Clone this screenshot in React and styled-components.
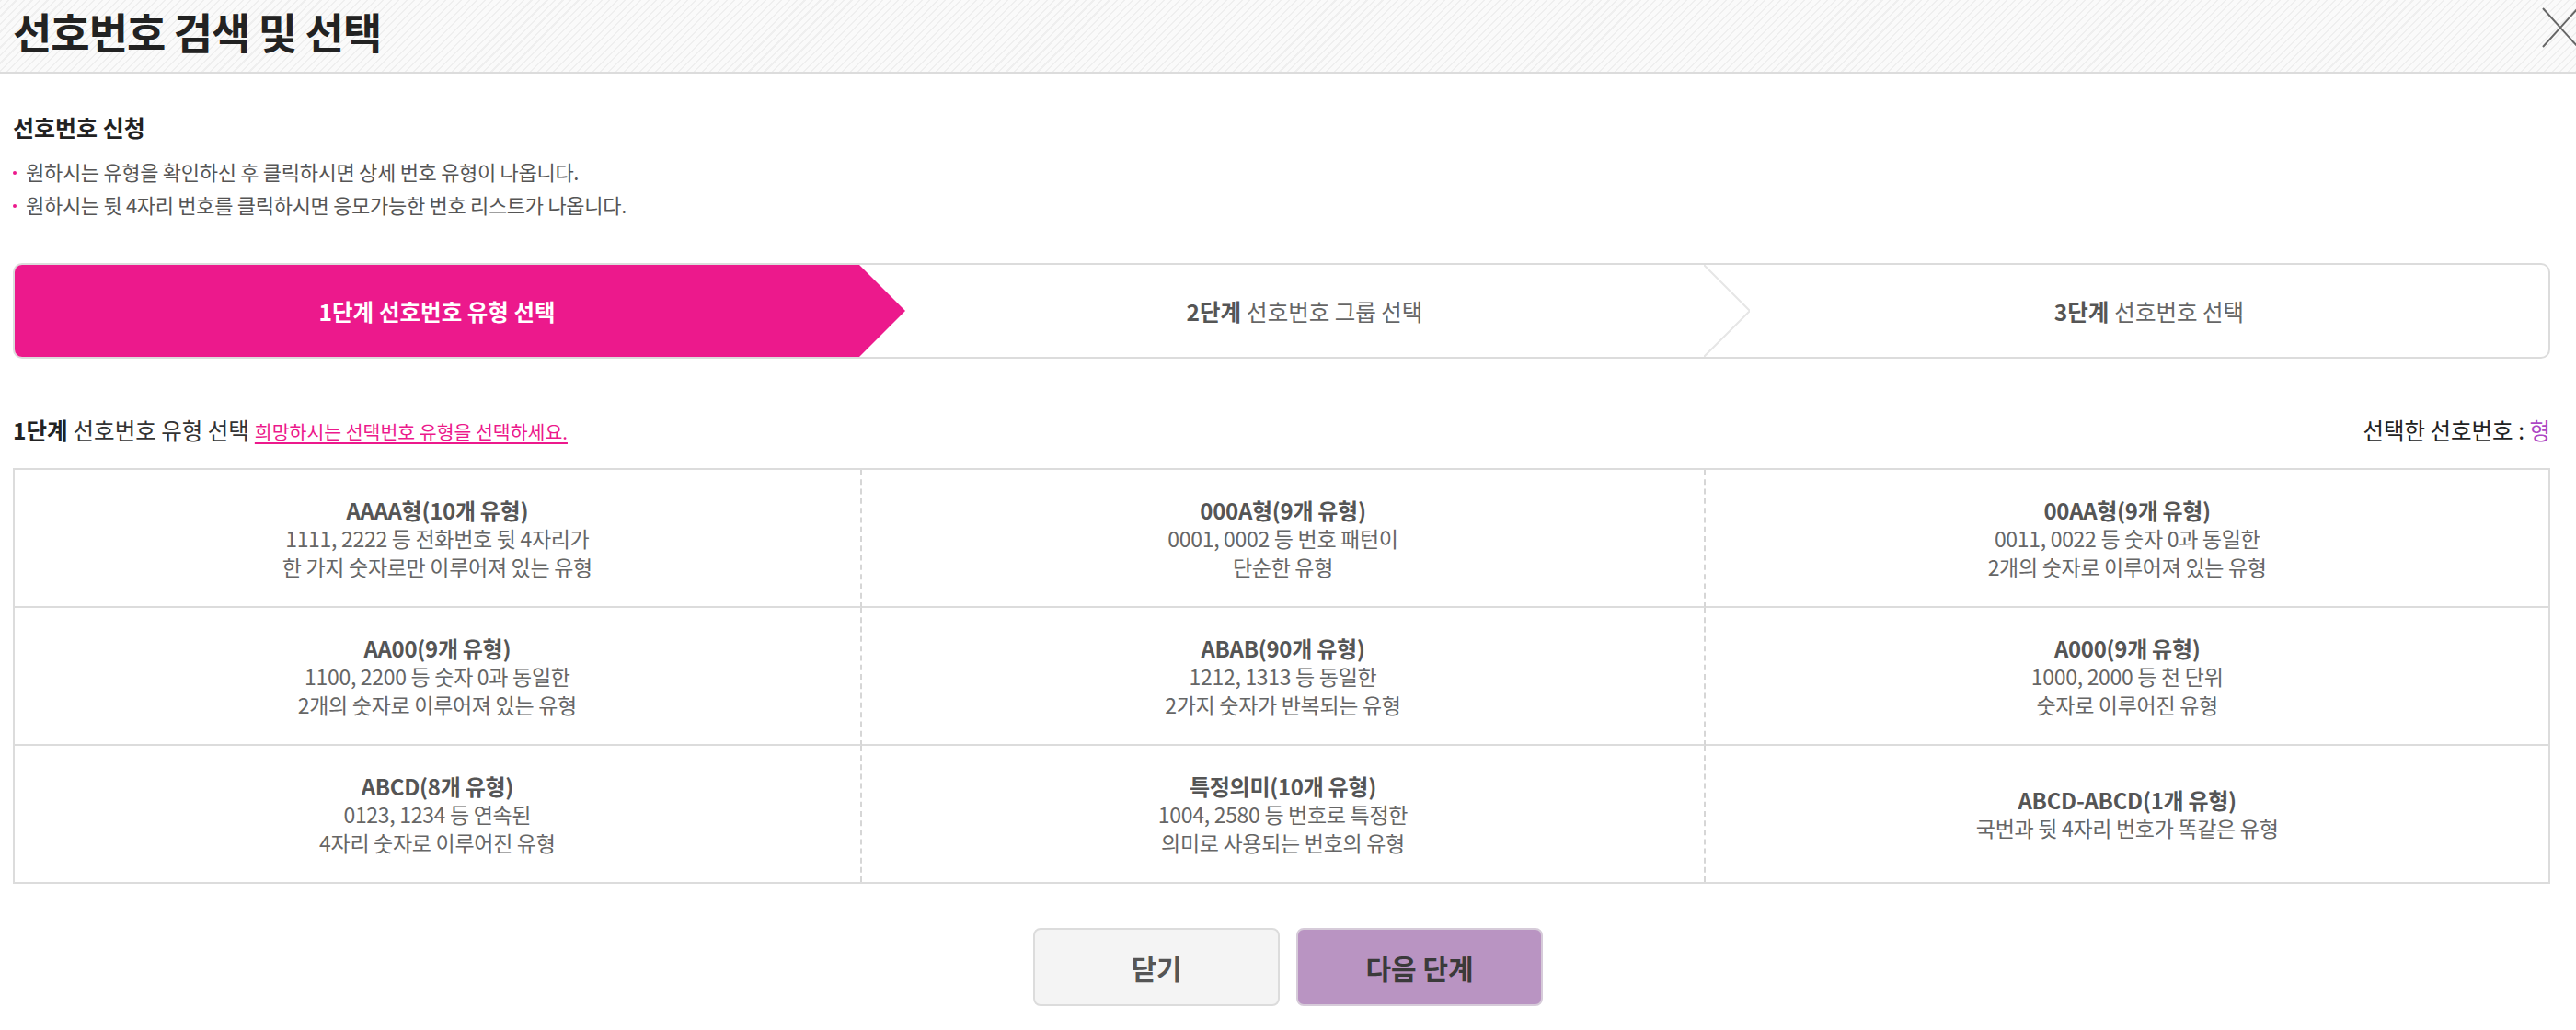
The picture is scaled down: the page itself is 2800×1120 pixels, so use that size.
import React from 'react'
import styled, { createGlobalStyle } from 'styled-components'

const PINK = '#ec198c'

const GlobalStyle = createGlobalStyle`
  * {
    box-sizing: border-box;
  }
  body {
    margin: 0;
    background: #fff;
    font-family: "Noto Sans CJK KR", "Noto Sans", sans-serif;
    color: #333;
  }
`

const Page = styled.div`
  width: 2800px;
  overflow: hidden;
`

const Header = styled.header`
  height: 80px;
  display: flex;
  justify-content: space-between;
  align-items: flex-start;
  padding-left: 14px;
  border-bottom: 2px solid #dcdcdc;
  background: repeating-linear-gradient(135deg, #efefef 0 1.5px, #fafafa 1.5px 6px);
`

const Title = styled.h1`
  margin: 0;
  font-size: 46px;
  line-height: 66px;
  font-weight: 700;
  color: #222;
  letter-spacing: -1px;
`

const CloseButton = styled.button`
  display: flex;
  width: 40px;
  height: 44px;
  margin: 8px -3px 0 0;
  padding: 0;
  border: 0;
  background: none;
  cursor: pointer;
`

const Content = styled.main`
  padding: 0 28px 0 14px;
`

const IntroTitle = styled.h2`
  margin: 42px 0 14px;
  font-size: 25px;
  line-height: 32px;
  font-weight: 700;
  color: #222;
`

const NoticeList = styled.ul`
  list-style: none;
  margin: 0;
  padding: 0;
`

const Notice = styled.li`
  display: flex;
  align-items: center;
  font-size: 22px;
  line-height: 36px;
  color: #555;
  letter-spacing: -0.3px;

  &::before {
    content: '';
    width: 4px;
    height: 4px;
    margin: 4px 10px 0 0;
    border-radius: 50%;
    background: ${PINK};
  }
`

const StepBar = styled.ol`
  list-style: none;
  display: flex;
  height: 104px;
  margin: 46px 0 0;
  padding: 0;
  border: 2px solid #dcdcdc;
  border-radius: 10px;
`

const Step = styled.li`
  position: relative;
  flex: 0 0 33.3333%;
  display: flex;
  align-items: center;
  justify-content: center;
  padding-left: ${(p) => (p.$index === 0 ? 0 : 50)}px;
  font-size: 24.5px;
  color: #666;
  background: ${(p) => (p.$active ? PINK : 'transparent')};
  border-radius: ${(p) => (p.$index === 0 ? '8px 0 0 8px' : 0)};
  z-index: ${(p) => 3 - p.$index};
`

const StepNum = styled.strong`
  font-weight: 700;
  color: ${(p) => (p.$active ? '#fff' : '#555')};
  margin-right: 6px;
`

const StepName = styled.span`
  color: ${(p) => (p.$active ? '#fff' : '#666')};
  font-weight: ${(p) => (p.$active ? 700 : 400)};
`

const StepArrow = styled.svg`
  position: absolute;
  top: 0;
  right: -50px;
  width: 50px;
  height: 100%;
`

const SectionRow = styled.div`
  display: flex;
  justify-content: space-between;
  align-items: baseline;
  margin-top: 62px;
  font-size: 24.5px;
  line-height: 32px;
  color: #333;
`

const SectionTitle = styled.div`
  strong {
    color: #222;
    font-weight: 700;
    margin-right: 6px;
  }
`

const HintLink = styled.a`
  margin-left: 6px;
  font-size: 20.5px;
  color: ${PINK};
  text-decoration: underline;
  text-underline-offset: 3px;
  cursor: pointer;
`

const Selected = styled.div`
  color: #222;
`

const SelectedValue = styled.span`
  color: #ad46c4;
`

const TypeGrid = styled.div`
  display: grid;
  grid-template-columns: 922fr 919fr 917fr;
  margin-top: 24px;
  border: 2px solid #dcdcdc;
`

const TypeCell = styled.button`
  display: flex;
  flex-direction: column;
  align-items: center;
  justify-content: center;
  height: 150px;
  padding: 0;
  border: 0;
  border-bottom: 2px solid #dcdcdc;
  border-right: 2px dashed #d6d6d6;
  background: #fff;
  font-family: inherit;
  font-size: 23px;
  line-height: 31px;
  color: #666;
  letter-spacing: -0.3px;
  cursor: pointer;

  &:nth-child(3n) {
    border-right: 0;
  }
  &:nth-last-child(-n + 3) {
    border-bottom: 0;
    height: 148px;
  }
`

const TypeName = styled.strong`
  font-size: 24px;
  font-weight: 700;
  color: #555;
`

const ButtonRow = styled.div`
  display: flex;
  justify-content: center;
  gap: 18px;
  margin: 48px -14px 0 0;
`

const ActionButton = styled.button`
  width: 268px;
  height: 85px;
  border-radius: 8px;
  border: 2px solid ${(p) => (p.$primary ? '#d6cbd9' : '#dcdcdc')};
  background: ${(p) => (p.$primary ? '#b994c2' : '#f4f4f4')};
  color: ${(p) => (p.$primary ? '#3a3a3a' : '#555')};
  font-family: inherit;
  font-size: 30px;
  font-weight: 700;
  cursor: pointer;
`

const steps = [
  { num: '1단계', name: '선호번호 유형 선택' },
  { num: '2단계', name: '선호번호 그룹 선택' },
  { num: '3단계', name: '선호번호 선택' },
]

const types = [
  { name: 'AAAA형(10개 유형)', desc: ['1111, 2222 등 전화번호 뒷 4자리가', '한 가지 숫자로만 이루어져 있는 유형'] },
  { name: '000A형(9개 유형)', desc: ['0001, 0002 등 번호 패턴이', '단순한 유형'] },
  { name: '00AA형(9개 유형)', desc: ['0011, 0022 등 숫자 0과 동일한', '2개의 숫자로 이루어져 있는 유형'] },
  { name: 'AA00(9개 유형)', desc: ['1100, 2200 등 숫자 0과 동일한', '2개의 숫자로 이루어져 있는 유형'] },
  { name: 'ABAB(90개 유형)', desc: ['1212, 1313 등 동일한', '2가지 숫자가 반복되는 유형'] },
  { name: 'A000(9개 유형)', desc: ['1000, 2000 등 천 단위', '숫자로 이루어진 유형'] },
  { name: 'ABCD(8개 유형)', desc: ['0123, 1234 등 연속된', '4자리 숫자로 이루어진 유형'] },
  { name: '특정의미(10개 유형)', desc: ['1004, 2580 등 번호로 특정한', '의미로 사용되는 번호의 유형'] },
  { name: 'ABCD-ABCD(1개 유형)', desc: ['국번과 뒷 4자리 번호가 똑같은 유형'] },
]

const App = () => {
  const current = 0

  return (
    <Page>
      <GlobalStyle />
      <Header>
        <Title>선호번호 검색 및 선택</Title>
        <CloseButton aria-label='닫기'>
          <svg width='40' height='44' viewBox='0 0 40 44'>
            <path d='M1 1 L39 43 M39 1 L1 43' stroke='#666' strokeWidth='2' fill='none' />
          </svg>
        </CloseButton>
      </Header>

      <Content>
        <IntroTitle>선호번호 신청</IntroTitle>
        <NoticeList>
          <Notice>원하시는 유형을 확인하신 후 클릭하시면 상세 번호 유형이 나옵니다.</Notice>
          <Notice>원하시는 뒷 4자리 번호를 클릭하시면 응모가능한 번호 리스트가 나옵니다.</Notice>
        </NoticeList>

        <StepBar>
          {steps.map((step, i) => (
            <Step key={step.num} $index={i} $active={i === current}>
              <StepNum $active={i === current}>{step.num}</StepNum>
              <StepName $active={i === current}>{step.name}</StepName>
              {i < steps.length - 1 && (
                <StepArrow viewBox='0 0 50 100' preserveAspectRatio='none'>
                  {i === current ? (
                    <polygon points='0,0 50,50 0,100' fill={PINK} />
                  ) : (
                    <polyline points='0,0 50,50 0,100' fill='none' stroke='#e6e6e6' strokeWidth='2' />
                  )}
                </StepArrow>
              )}
            </Step>
          ))}
        </StepBar>

        <SectionRow>
          <SectionTitle>
            <strong>1단계</strong>
            선호번호 유형 선택
            <HintLink>희망하시는 선택번호 유형을 선택하세요.</HintLink>
          </SectionTitle>
          <Selected>
            선택한 선호번호 : <SelectedValue>형</SelectedValue>
          </Selected>
        </SectionRow>

        <TypeGrid>
          {types.map((type) => (
            <TypeCell key={type.name}>
              <TypeName>{type.name}</TypeName>
              {type.desc.map((line) => (
                <span key={line}>{line}</span>
              ))}
            </TypeCell>
          ))}
        </TypeGrid>

        <ButtonRow>
          <ActionButton>닫기</ActionButton>
          <ActionButton $primary>다음 단계</ActionButton>
        </ButtonRow>
      </Content>
    </Page>
  )
}

export default App
